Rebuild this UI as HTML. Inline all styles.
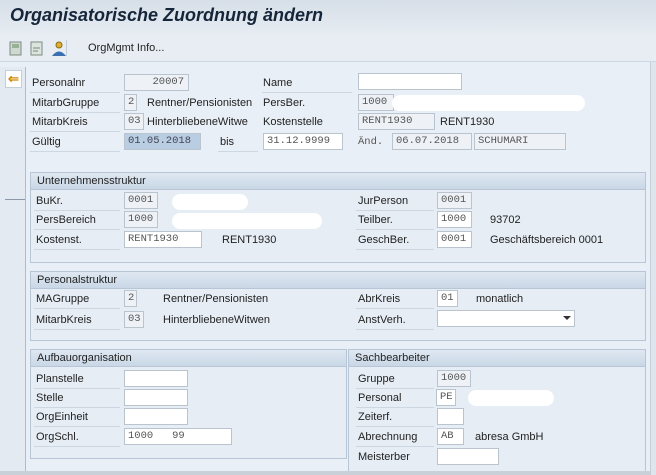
<!DOCTYPE html>
<html><head><meta charset="utf-8"><style>
*{margin:0;padding:0;box-sizing:border-box}
body{width:656px;height:475px;overflow:hidden;background:#e9eff6;font-family:"Liberation Sans",sans-serif;font-size:11px;color:#222;position:relative}
.a{position:absolute;white-space:nowrap}
.l{position:absolute;white-space:nowrap;line-height:14px}
.ul{position:absolute;height:1px;background:#cdd7e2}
.f{position:absolute;height:17px;border:1px solid #b9c4cf;background:#eef2f6;font-family:"Liberation Mono",monospace;font-size:10.5px;color:#555;line-height:15px;padding-left:3px;white-space:nowrap}
.w{background:#fff}
.blob{position:absolute;height:16px;background:#fff;border-radius:8px}
.grp{position:absolute;border:1px solid #b7c6d6;background:#e6edf5}
.gh{position:absolute;left:0;right:0;top:0;height:17px;background:linear-gradient(#dfe8f2,#c9d7e6);border-bottom:1px solid #b7c6d6;padding-left:6px;line-height:16px}
</style></head><body>
<div class="a" style="left:0;top:0;width:656px;height:34px;background:linear-gradient(#d6dee7,#e6ecf2)"></div>
<div class="a" style="left:10px;top:5px;font-size:18px;font-weight:bold;font-style:italic;color:#15253a">Organisatorische Zuordnung ändern</div>
<div class="a" style="left:0;top:34px;width:656px;height:28px;background:#e8edf3;border-bottom:1px solid #cfd8e2"></div>
<svg class="a" style="left:9px;top:40px" width="70" height="18"><rect x="1" y="2" width="11" height="13" fill="#cfd9cf" stroke="#7d8c80"/><rect x="3" y="4" width="7" height="4" fill="#98b098"/><rect x="22" y="2" width="11" height="13" fill="#dde3dd" stroke="#7d8c80"/><path d="M24 8h7M24 11h5" stroke="#7a8a7a"/><circle cx="50" cy="5" r="3" fill="#e0b030" stroke="#8a6a10"/><path d="M43 16q7-9 14 0z" fill="#3a6fb0"/></svg>
<div class="a" style="left:66px;top:40px;width:1px;height:16px;background:#c2ccd6"></div>
<div class="a" style="left:88px;top:42px">OrgMgmt Info...</div>
<div class="a" style="left:0;top:67px;width:26px;height:408px;background:#e3eaf2;border-right:1px solid #aebccb"></div>
<div class="a" style="left:5px;top:70px;width:17px;height:18px;background:#fff;border:1px solid #c4ced9;color:#d08a00;font-size:13px;line-height:15px;text-align:center;font-weight:bold">&#8656;</div>
<div class="a" style="left:5px;top:199px;width:20px;height:1px;background:#8a98a8"></div>
<div class="l" style="left:32px;top:76px">Personalnr</div><div class="ul" style="left:30px;top:92px;width:90px"></div>
<div class="f" style="left:124px;top:74px;width:65px;text-align:right;padding-right:4px">20007</div>
<div class="l" style="left:263px;top:76px">Name</div><div class="ul" style="left:262px;top:92px;width:90px"></div>
<div class="f w" style="left:358px;top:73px;width:104px"></div>
<div class="l" style="left:32px;top:96px">MitarbGruppe</div><div class="ul" style="left:30px;top:112px;width:90px"></div>
<div class="f" style="left:124px;top:94px;width:13px">2</div>
<div class="l" style="left:147px;top:96px">Rentner/Pensionisten</div>
<div class="l" style="left:263px;top:96px">PersBer.</div>
<div class="f" style="left:358px;top:94px;width:36px">1000</div>
<div class="blob" style="left:392px;top:95px;width:193px"></div>
<div class="l" style="left:32px;top:115px">MitarbKreis</div><div class="ul" style="left:30px;top:131px;width:90px"></div>
<div class="f" style="left:124px;top:113px;width:20px">03</div>
<div class="l" style="left:147px;top:115px;width:112px;overflow:hidden">HinterbliebeneWitwe</div>
<div class="l" style="left:263px;top:115px">Kostenstelle</div>
<div class="f" style="left:358px;top:113px;width:77px">RENT1930</div>
<div class="l" style="left:440px;top:115px">RENT1930</div>
<div class="l" style="left:32px;top:135px">Gültig</div><div class="ul" style="left:30px;top:151px;width:90px"></div>
<div class="f" style="left:124px;top:133px;width:77px;background:#b9cde3;color:#445">01.05.2018</div>
<div class="l" style="left:220px;top:135px">bis</div><div class="ul" style="left:218px;top:151px;width:40px"></div>
<div class="f w" style="left:263px;top:133px;width:80px">31.12.9999</div>
<div class="l" style="left:358px;top:135px;font-family:'Liberation Mono',monospace;font-size:10.5px;color:#555">Änd.</div>
<div class="f" style="left:392px;top:133px;width:80px">06.07.2018</div>
<div class="f" style="left:474px;top:133px;width:92px">SCHUMARI</div>
<div class="grp" style="left:30px;top:172px;width:616px;height:91px"><div class="gh">Unternehmensstruktur</div></div>
<div class="l" style="left:36px;top:194px">BuKr.</div><div class="ul" style="left:34px;top:210px;width:86px"></div>
<div class="f" style="left:124px;top:192px;width:34px">0001</div>
<div class="blob" style="left:172px;top:194px;width:76px"></div>
<div class="l" style="left:36px;top:213px">PersBereich</div><div class="ul" style="left:34px;top:229px;width:86px"></div>
<div class="f" style="left:124px;top:211px;width:34px">1000</div>
<div class="blob" style="left:172px;top:213px;width:150px"></div>
<div class="l" style="left:36px;top:233px">Kostenst.</div><div class="ul" style="left:34px;top:249px;width:86px"></div>
<div class="f w" style="left:124px;top:231px;width:78px">RENT1930</div>
<div class="l" style="left:222px;top:233px">RENT1930</div>
<div class="l" style="left:358px;top:194px">JurPerson</div><div class="ul" style="left:356px;top:210px;width:78px"></div>
<div class="f" style="left:437px;top:192px;width:35px">0001</div>
<div class="l" style="left:358px;top:213px">Teilber.</div><div class="ul" style="left:356px;top:229px;width:78px"></div>
<div class="f w" style="left:437px;top:211px;width:35px">1000</div>
<div class="l" style="left:490px;top:213px">93702</div>
<div class="l" style="left:358px;top:233px">GeschBer.</div><div class="ul" style="left:356px;top:249px;width:78px"></div>
<div class="f w" style="left:437px;top:231px;width:35px">0001</div>
<div class="l" style="left:490px;top:233px">Geschäftsbereich 0001</div>
<div class="grp" style="left:30px;top:271px;width:616px;height:70px"><div class="gh">Personalstruktur</div></div>
<div class="l" style="left:36px;top:292px">MAGruppe</div><div class="ul" style="left:34px;top:308px;width:86px"></div>
<div class="f" style="left:124px;top:290px;width:13px">2</div>
<div class="l" style="left:163px;top:292px">Rentner/Pensionisten</div>
<div class="l" style="left:36px;top:313px">MitarbKreis</div><div class="ul" style="left:34px;top:329px;width:86px"></div>
<div class="f" style="left:124px;top:311px;width:20px">03</div>
<div class="l" style="left:163px;top:313px">HinterbliebeneWitwen</div>
<div class="l" style="left:358px;top:292px">AbrKreis</div><div class="ul" style="left:356px;top:308px;width:78px"></div>
<div class="f w" style="left:437px;top:290px;width:21px">01</div>
<div class="l" style="left:476px;top:292px">monatlich</div>
<div class="l" style="left:358px;top:313px">AnstVerh.</div><div class="ul" style="left:356px;top:329px;width:78px"></div>
<div class="f w" style="left:437px;top:310px;width:138px"></div>
<svg class="a" style="left:563px;top:316px" width="8" height="5"><path d="M0 0h8l-4 4z" fill="#333"/></svg>
<div class="grp" style="left:30px;top:349px;width:317px;height:110px"><div class="gh">Aufbauorganisation</div></div>
<div class="l" style="left:36px;top:372px">Planstelle</div><div class="ul" style="left:34px;top:388px;width:86px"></div>
<div class="f w" style="left:124px;top:370px;width:64px"></div>
<div class="l" style="left:36px;top:391px">Stelle</div><div class="ul" style="left:34px;top:407px;width:86px"></div>
<div class="f w" style="left:124px;top:389px;width:64px"></div>
<div class="l" style="left:36px;top:410px">OrgEinheit</div><div class="ul" style="left:34px;top:426px;width:86px"></div>
<div class="f w" style="left:124px;top:408px;width:64px"></div>
<div class="l" style="left:36px;top:430px">OrgSchl.</div><div class="ul" style="left:34px;top:446px;width:86px"></div>
<div class="f w" style="left:124px;top:428px;width:108px">1000&nbsp;&nbsp;&nbsp;99</div>
<div class="grp" style="left:348px;top:349px;width:298px;height:126px;border-bottom:none"><div class="gh">Sachbearbeiter</div></div>
<div class="l" style="left:358px;top:372px">Gruppe</div><div class="ul" style="left:356px;top:388px;width:78px"></div>
<div class="f" style="left:437px;top:370px;width:34px">1000</div>
<div class="l" style="left:358px;top:391px">Personal</div><div class="ul" style="left:356px;top:407px;width:78px"></div>
<div class="f w" style="left:436px;top:389px;width:20px">PE</div>
<div class="blob" style="left:468px;top:390px;width:86px"></div>
<div class="l" style="left:358px;top:410px">Zeiterf.</div><div class="ul" style="left:356px;top:426px;width:78px"></div>
<div class="f w" style="left:437px;top:408px;width:27px"></div>
<div class="l" style="left:358px;top:430px">Abrechnung</div><div class="ul" style="left:356px;top:446px;width:78px"></div>
<div class="f w" style="left:437px;top:428px;width:27px">AB</div>
<div class="l" style="left:475px;top:430px">abresa GmbH</div>
<div class="l" style="left:358px;top:450px">Meisterber</div>
<div class="f w" style="left:437px;top:448px;width:62px"></div>
<div class="a" style="left:0;top:471px;width:656px;height:4px;background:#c9d0d8"></div>
<div class="a" style="left:650px;top:62px;width:6px;height:413px;background:#dfe5ec;border-left:1px solid #c5cfda"></div>
</body></html>
